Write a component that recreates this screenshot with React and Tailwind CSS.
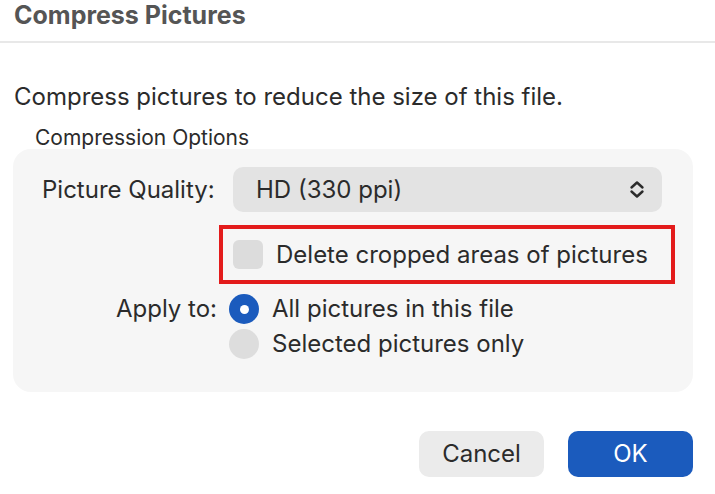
import { useState } from 'react';

const font = { fontFamily: 'Inter, "Noto Sans", sans-serif' };

const Chevrons = () => (
  <svg width="16" height="19" viewBox="0 0 16 19" fill="none" stroke="#2b2b2b" strokeWidth="2.4" strokeLinecap="round" strokeLinejoin="round">
    <path d="M2.5 7.5 L8 2.5 L13.5 7.5" />
    <path d="M2.5 11.5 L8 16.5 L13.5 11.5" />
  </svg>
);

export default function App() {
  const [applyTo, setApplyTo] = useState('all');
  const [deleteCropped, setDeleteCropped] = useState(false);

  return (
    <div className="w-[715px] h-[494px] bg-white text-[#2b2b2b] overflow-hidden" style={font}>
      <header className="h-[43px] border-b-2 border-[#e8e8e8] pl-[14px] pt-[1px]">
        <h1 className="text-[25px] leading-[28px] font-bold text-[#555555]">Compress Pictures</h1>
      </header>

      <p className="mt-[41px] pl-[14px] text-[24px] leading-[26px]">Compress pictures to reduce the size of this file.</p>

      <div className="mt-[17px] pl-[35px] text-[21px] leading-[22px]">Compression Options</div>

      <section className="mx-[13px] w-[680px] h-[243px] bg-[#f6f6f6] rounded-[18px] pt-[18px]">
        <div className="flex items-center">
          <label className="w-[220px] pl-[29px] text-[24px]">Picture Quality:</label>
          <button className="w-[429px] h-[45px] bg-[#e3e3e3] rounded-[10px] flex items-center justify-between pl-[23px] pr-[17px] text-[24px]">
            <span>HD (330 ppi)</span>
            <Chevrons />
          </button>
        </div>

        <div className="mt-[13px] ml-[206px] w-[456px] h-[59px] border-4 border-[#e31b1b] flex items-center pl-[10px]">
          <button onClick={() => setDeleteCropped(!deleteCropped)} className="w-[30px] h-[29px] rounded-[6px] bg-[#dcdcdc] shrink-0" />
          <span className="ml-[13px] text-[24px]">Delete cropped areas of pictures</span>
        </div>

        <div className="mt-[10px] flex">
          <div className="w-[216px] text-right pr-[12px] text-[24px] leading-[30px]">Apply to:</div>
          <div className="flex flex-col gap-[5px]">
            {[
              { id: 'all', label: 'All pictures in this file' },
              { id: 'selected', label: 'Selected pictures only' },
            ].map(opt => (
              <label key={opt.id} onClick={() => setApplyTo(opt.id)} className="flex items-center h-[30px] cursor-pointer">
                {applyTo === opt.id ? (
                  <span className="w-[30px] h-[30px] rounded-full bg-[#1b5bbd] flex items-center justify-center">
                    <span className="w-[9px] h-[9px] rounded-full bg-white" />
                  </span>
                ) : (
                  <span className="w-[30px] h-[30px] rounded-full bg-[#dddddd]" />
                )}
                <span className="ml-[13px] text-[24px]">{opt.label}</span>
              </label>
            ))}
          </div>
        </div>
      </section>

      <footer className="mt-[39px] flex justify-end gap-[24px] pr-[22px]">
        <button className="w-[125px] h-[46px] rounded-[10px] bg-[#ebebeb] text-[24px]">Cancel</button>
        <button className="w-[125px] h-[46px] rounded-[10px] bg-[#1b5bbd] text-white text-[24px]">OK</button>
      </footer>
    </div>
  );
}
